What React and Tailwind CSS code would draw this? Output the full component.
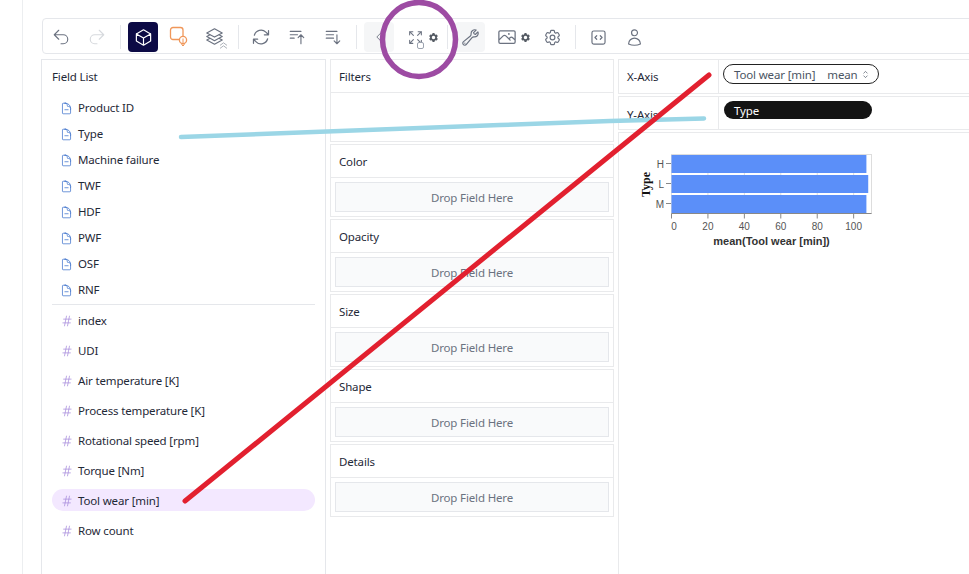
import React from "react";
import {
  HiOutlineArrowUturnLeft, HiOutlineArrowUturnRight, HiOutlineCube, HiOutlineSquare3Stack3D,
  HiOutlineArrowPath, HiOutlineBarsArrowUp, HiOutlineBarsArrowDown, HiOutlineArrowsPointingOut,
  HiOutlineWrench, HiOutlinePhoto, HiOutlineCog6Tooth, HiOutlineCodeBracketSquare, HiOutlineUser,
  HiCog6Tooth, HiOutlineDocumentMinus, HiOutlineHashtag, HiOutlineChevronUpDown, HiOutlineChevronLeft,
} from "react-icons/hi2";

const font = { fontFamily: '"Noto Sans", sans-serif' };

function Btn({ children, className = "" }) {
  return <div className={`w-[30px] h-[30px] mx-[3px] shrink-0 rounded flex items-center justify-center text-[#6b7280] ${className}`}>{children}</div>;
}
function Sep() {
  return <div className="w-px h-[24px] mx-[4.5px] shrink-0 bg-[#e5e7eb] mt-0" />;
}
function ShapeIcon() {
  return (
    <svg width="20" height="22" viewBox="0 0 20 22" fill="none" stroke="#f0975a" strokeWidth="1.3">
      <rect x="1.5" y="1.5" width="12.5" height="12" rx="2.5" />
      <circle cx="14" cy="14" r="3.6" fill="#fff" />
      <path d="M14 12.5V20M12.4 18.4L14 20l1.6-1.6" strokeWidth="1" />
    </svg>
  );
}
function StackIcon() {
  return (
    <div className="relative w-[20px] h-[20px]">
      <HiOutlineSquare3Stack3D size={19} className="text-[#6b7280]" />
      <svg width="9" height="7" viewBox="0 0 9 7" fill="none" stroke="#a3a8b0" strokeWidth="0.9" className="absolute right-[-3px] bottom-[-2px]">
        <path d="M1 3.4L4.5 .8 8 3.4M1 6.4L4.5 3.8 8 6.4" />
      </svg>
    </div>
  );
}

const dims = ["Product ID", "Type", "Machine failure", "TWF", "HDF", "PWF", "OSF", "RNF"];
const meas = ["index", "UDI", "Air temperature [K]", "Process temperature [K]", "Rotational speed [rpm]", "Torque [Nm]", "Tool wear [min]", "Row count"];
const slots = ["Color", "Opacity", "Size", "Shape", "Details"];

function Slot({ name }) {
  return (
    <div className="border border-[#e9eaec] h-[73px] shrink-0 flex flex-col">
      <div className="h-[33px] border-b border-[#e9eaec] px-[8px] pt-[2px] flex items-center text-[11.5px] tracking-[-0.15px] text-[#1f2937]">{name}</div>
      <div className="flex-1 p-[4px]">
        <div className="h-[30px] border border-[#e5e7eb] bg-[#f9fafb] pt-[2px] flex items-center justify-center text-[11.5px] tracking-[-0.15px] text-[#6b7280]">Drop Field Here</div>
      </div>
    </div>
  );
}

function Chart() {
  const t = [0, 20, 40, 60, 80, 100];
  const x = (v) => 41.5 + v * 1.8215;
  const bars = [["H", 10, 107], ["L", 30, 108], ["M", 50, 107]];
  return (
    <svg width="250" height="105" viewBox="0 0 250 105" style={{ fontFamily: '"Liberation Sans", sans-serif' }}>
      <rect x="41.5" y="9.5" width="200" height="59" fill="none" stroke="#dddddd" />
      {t.map((v) => <line key={v} x1={x(v)} x2={x(v)} y1="9.5" y2="68.5" stroke="#dddddd" />)}
      {bars.map(([n, y, v]) => <rect key={n} x="41.5" y={y} width={v * 1.8215} height="18" fill="#5b8ff9" />)}
      <line x1="41.5" x2="241.5" y1="68.5" y2="68.5" stroke="#888888" />
      {t.map((v) => <line key={v} x1={x(v)} x2={x(v)} y1="68.5" y2="73.5" stroke="#888888" />)}
      {bars.map(([n, y]) => <g key={n}>
        <line x1="36" x2="41" y1={y + 8.5} y2={y + 8.5} stroke="#888888" />
        <text x="34" y={y + 12.5} textAnchor="end" fontSize="10" fill="#555555">{n}</text>
      </g>)}
      {t.map((v) => <text key={v} x={v === 0 ? x(v) + 2.5 : x(v)} y="85" textAnchor="middle" fontSize="10" fill="#555555">{v}</text>)}
      <text x="141.5" y="100" textAnchor="middle" fontSize="11" fontWeight="700" fill="#333333">mean(Tool wear [min])</text>
      <text transform="translate(20 39.5) rotate(-90)" textAnchor="middle" fontSize="12" fontWeight="700" fill="#111111" style={{ fontFamily: '"Liberation Serif", serif' }}>Type</text>
    </svg>
  );
}

export default function App() {
  return (
    <div className="relative w-[969px] h-[574px] overflow-hidden bg-white" style={font}>
      <div className="ml-[22px] h-full border-l border-[#eceef0] pl-[18px] pt-[18px] flex flex-col">
        <div className="ml-px h-[36px] w-[1000px] shrink-0 border border-[#e5e7eb] rounded-sm pt-[3px] pb-px flex items-center">
          <Btn><HiOutlineArrowUturnLeft size={18} className="text-[#6b7280]" /></Btn>
          <Btn><HiOutlineArrowUturnRight size={18} className="text-[#d6d9dd]" /></Btn>
          <Sep />
          <Btn className="bg-[#0c0a45]"><HiOutlineCube size={19} className="text-white" /></Btn>
          <Btn><ShapeIcon /></Btn>
          <Btn><StackIcon /></Btn>
          <Sep />
          <Btn><HiOutlineArrowPath size={20} /></Btn>
          <Btn><HiOutlineBarsArrowUp size={18} /></Btn>
          <Btn><HiOutlineBarsArrowDown size={18} /></Btn>
          <Sep />
          <Btn className="bg-[#f5f6f7]"><HiOutlineChevronLeft size={14} /></Btn>
          <div className="w-[39px] h-[30px] mx-[3px] shrink-0 pl-[7px] flex items-center gap-[4px] text-[#6b7280] relative">
            <HiOutlineArrowsPointingOut size={17} className="shrink-0" />
            <HiCog6Tooth size={11} className="shrink-0 text-[#555b64]" />
            <div className="absolute left-[17px] top-[20px] w-[7px] h-[7px] rounded-[2px] border border-[#9ca3af] bg-white" />
          </div>
          <Sep />
          <Btn className="bg-[#f5f6f7]"><HiOutlineWrench size={19} /></Btn>
          <div className="w-[40px] h-[30px] mx-[3px] shrink-0 pl-[6px] flex items-center gap-[3px] text-[#6b7280]">
            <HiOutlinePhoto size={20} className="shrink-0" />
            <HiCog6Tooth size={11} className="shrink-0 text-[#555b64]" />
          </div>
          <Btn><HiOutlineCog6Tooth size={19} /></Btn>
          <Sep />
          <Btn><HiOutlineCodeBracketSquare size={19} /></Btn>
          <Btn><HiOutlineUser size={19} /></Btn>
        </div>

        <div className="flex gap-[4px] mt-[5px] flex-1 min-h-0">
          <div className="w-[285px] shrink-0 border border-[#e5e7eb] border-b-0 px-[10px]">
            <div className="h-[33px] flex items-center text-[11.5px] tracking-[-0.15px] text-[#1f2937]">Field List</div>
            <div className="mt-[4px] flex flex-col gap-[4px] pb-[3px] border-b border-[#e5e7eb]">
              {dims.map((d) => (
                <div key={d} className="h-[22px] flex items-center pl-[8px] text-[11.5px] tracking-[-0.15px] text-[#1f2937]">
                  <HiOutlineDocumentMinus size={13} className="text-[#4f7fd0] shrink-0 mr-[5px]" />
                  {d}
                </div>
              ))}
            </div>
            <div className="mt-[4px] flex flex-col gap-[8px]">
              {meas.map((d) => (
                <div key={d} className={`h-[22px] pt-[1px] flex items-center pl-[9px] rounded-full text-[11.5px] tracking-[-0.15px] text-[#1f2937] ${d === "Tool wear [min]" ? "bg-[#f3e8ff]" : ""}`}>
                  <HiOutlineHashtag size={12} className="text-[#a78bdb] shrink-0 mr-[5px]" />
                  {d}
                </div>
              ))}
            </div>
          </div>

          <div className="w-[284px] shrink-0 flex flex-col gap-[2px]">
            <div className="border border-[#e9eaec] h-[83px] shrink-0">
              <div className="h-[33px] border-b border-[#e9eaec] px-[8px] pt-[2px] flex items-center text-[11.5px] tracking-[-0.15px] text-[#1f2937]">Filters</div>
            </div>
            {slots.map((s) => <Slot key={s} name={s} />)}
          </div>

          <div className="w-[400px] shrink-0 flex flex-col gap-[2px]">
            <div className="h-[35px] shrink-0 border border-[#e9eaec] flex">
              <div className="w-[100px] shrink-0 border-r border-[#e9eaec] px-[8px] flex items-center text-[11.5px] tracking-[-0.15px] text-[#1f2937]">X-Axis</div>
              <div className="pl-[4px] pt-[4px]">
                <div className="w-[156px] h-[20px] border border-[#222222] rounded-full pl-[10px] pt-[1px] flex items-center text-[11.5px] tracking-[-0.15px] text-[#4b5563]">
                  <span>Tool wear [min]</span>
                  <span className="ml-[12px]">mean</span>
                  <HiOutlineChevronUpDown size={11} className="ml-[2px]" />
                </div>
              </div>
            </div>
            <div className="h-[34px] shrink-0 border border-[#e9eaec] flex">
              <div className="w-[100px] shrink-0 border-r border-[#e9eaec] px-[8px] pt-[3px] flex items-center text-[11.5px] tracking-[-0.15px] text-[#1f2937]">Y-Axis</div>
              <div className="pl-[5px] pt-[4px]">
                <div className="w-[148px] h-[18px] bg-[#141414] rounded-full pl-[10px] pt-[1px] flex items-center text-[11.5px] tracking-[-0.15px] text-white">Type</div>
              </div>
            </div>
            <div className="flex-1 border border-[#e9eaec] border-b-0 pl-[11px] pt-[12px]">
              <Chart />
            </div>
          </div>
        </div>
      </div>

      <svg width="969" height="574" className="absolute inset-0 pointer-events-none" fill="none">
        <ellipse cx="419" cy="39.5" rx="36.5" ry="37" stroke="#9d4ba3" strokeWidth="5.5" />
        <polyline points="181,137 340,131 500,125 610,121 704,118.5" stroke="#9bd6e6" strokeWidth="4.5" strokeLinecap="round" />
        <line x1="185" y1="501" x2="709" y2="75" stroke="#e2202f" strokeWidth="5" strokeLinecap="round" />
      </svg>
    </div>
  );
}
